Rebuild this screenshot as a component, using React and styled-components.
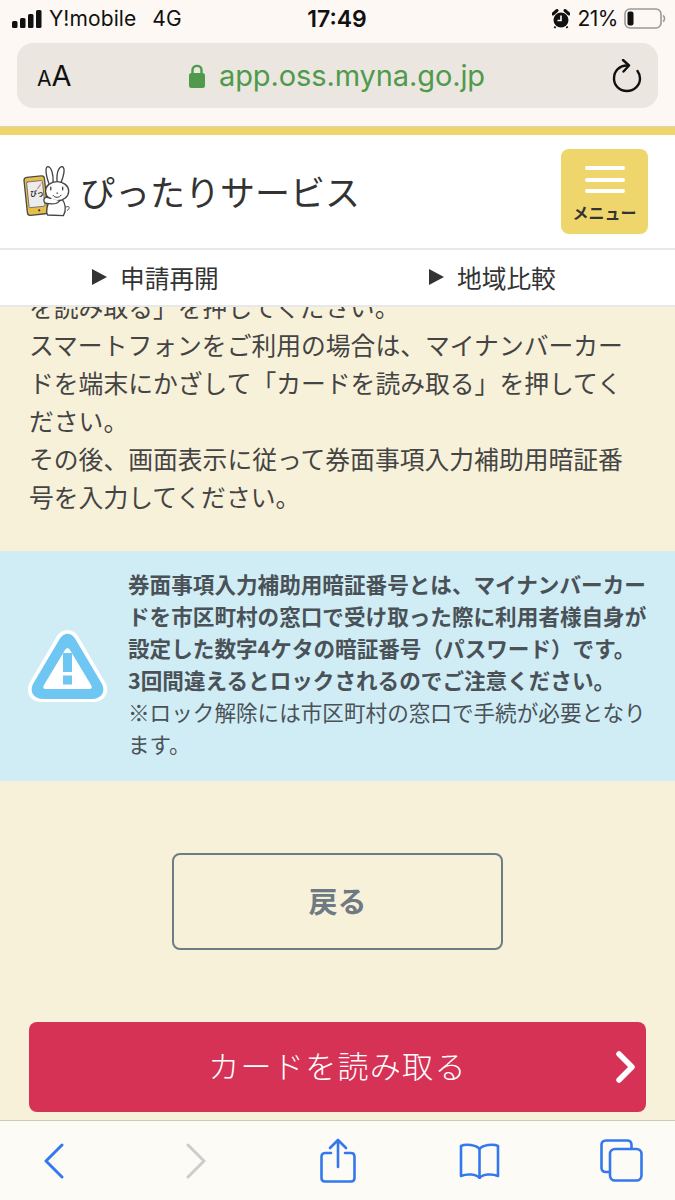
import React from 'react';
import styled, { createGlobalStyle } from 'styled-components';

const GlobalStyle = createGlobalStyle`
    html, body {
        margin: 0;
        padding: 0;
        background: #f8f1da;
    }
    * {
        box-sizing: border-box;
    }
`;

const jpFont = `"Noto Sans CJK JP", "Noto Sans", sans-serif`;
const iosFont = `Inter, Roboto, "Liberation Sans", sans-serif`;

const Phone = styled.div`
    width: 675px;
    height: 1200px;
    display: flex;
    flex-direction: column;
    overflow: hidden;
    font-family: ${jpFont};
`;

const Chrome = styled.div`
    height: 127px;
    flex: none;
    padding: 0 17px;
    background: #fdf8f3;
    border-bottom: 1px solid #e0d6b4;
`;

const StatusBar = styled.div`
    height: 43px;
    padding: 0 0 6px 0;
    margin-left: -5px;
    margin-right: -8px;
    display: grid;
    grid-template-columns: 1fr auto 1fr;
    align-items: center;
    font-family: ${iosFont};
    font-size: 21px;
    color: #111;
`;

const StatusLeft = styled.div`
    display: flex;
    align-items: center;
`;

const Carrier = styled.span`
    margin-left: 6px;
    letter-spacing: 0.1px;
`;

const Network = styled.span`
    margin-left: 16px;
`;

const Clock = styled.div`
    font-weight: 600;
    font-size: 23px;
    margin-right: 4px;
`;

const StatusRight = styled.div`
    display: flex;
    align-items: center;
    justify-content: flex-end;
`;

const Percent = styled.span`
    margin: 0 6px 0 8px;
    letter-spacing: -0.5px;
`;

const AddressBar = styled.div`
    height: 65px;
    display: flex;
    align-items: center;
    justify-content: space-between;
    padding: 0 15px 0 20px;
    border-radius: 16px;
    background: #ebe6e0;
`;

const TextSize = styled.div`
    display: flex;
    align-items: baseline;
    font-family: ${iosFont};
    color: #111;
    font-size: 29px;
    width: 34px;
`;

const SmallA = styled.span`
    font-size: 21px;
`;

const Url = styled.div`
    display: flex;
    align-items: center;
    gap: 14px;
    font-family: ${iosFont};
    font-size: 29px;
    color: #4f9a4c;
    margin-right: 8px;
    letter-spacing: -0.1px;
`;

const YellowStrip = styled.div`
    height: 8px;
    flex: none;
    background: #efd66c;
`;

const Header = styled.header`
    height: 115px;
    flex: none;
    display: flex;
    align-items: center;
    justify-content: space-between;
    padding: 0 27px 0 23px;
    background: #fff;
    border-bottom: 2px solid #e8e8e8;
`;

const Brand = styled.div`
    display: flex;
    align-items: center;
    gap: 9px;
    margin-bottom: 2px;
    font-size: 35px;
    color: #333;
    line-height: 1;
`;

const MenuButton = styled.div`
    width: 87px;
    height: 85px;
    border-radius: 8px;
    background: #efd66c;
    display: flex;
    flex-direction: column;
    align-items: center;
    padding-top: 17px;
`;

const MenuBar = styled.span`
    flex: none;
    width: 40px;
    height: 4px;
    border-radius: 2px;
    background: #fff;
    margin-bottom: 7.5px;
`;

const MenuLabel = styled.span`
    margin-top: 1px;
    font-size: 16px;
    line-height: 20px;
    font-weight: 700;
    color: #333;
`;

const Tabs = styled.nav`
    height: 57px;
    flex: none;
    display: grid;
    grid-template-columns: 337px 338px;
    background: #fff;
    border-bottom: 2px solid #e8e8e8;
`;

const Tab = styled.div`
    display: flex;
    align-items: center;
    gap: 13px;
    padding: 0 0 2px 92px;
    font-size: 24.7px;
    color: #333;
`;

const TabMark = styled.span`
    width: 0;
    height: 0;
    border-left: 15px solid #333;
    border-top: 8px solid transparent;
    border-bottom: 8px solid transparent;
`;

const Content = styled.main`
    flex: 1;
    min-height: 0;
    overflow: hidden;
    background: #f8f1da;
`;

const Guide = styled.p`
    margin: -20px 0 36px;
    padding-left: 29px;
    font-size: 24.8px;
    line-height: 38px;
    color: #444;
    white-space: nowrap;
`;

const Notice = styled.section`
    height: 230px;
    display: flex;
    align-items: center;
    background: #d0edf6;
    padding: 0 0 0 28px;
`;

const NoticeIcon = styled.svg`
    flex: none;
    width: 79px;
    height: 73px;
    margin-right: 21px;
`;

const NoticeText = styled.div`
    padding-bottom: 4px;
    font-size: 21.6px;
    line-height: 32px;
    color: #4a5257;
    white-space: nowrap;
`;

const Strong = styled.div`
    font-weight: 700;
`;

const BackButton = styled.div`
    width: 331px;
    height: 97px;
    margin: 72px auto;
    padding-bottom: 4px;
    border: 2px solid #6f7c86;
    border-radius: 8px;
    display: flex;
    align-items: center;
    justify-content: center;
    font-size: 29px;
    font-weight: 700;
    color: #6f7a82;
`;

const ReadButton = styled.div`
    position: relative;
    width: 617px;
    height: 90px;
    margin-left: 29px;
    padding-bottom: 6px;
    border-radius: 8px;
    background: #d63256;
    display: flex;
    align-items: center;
    justify-content: center;
    font-size: 31px;
    font-weight: 300;
    letter-spacing: 1.3px;
    color: #fff;
`;

const ReadChevron = styled.svg`
    position: absolute;
    right: 9px;
    top: 29px;
    width: 22px;
    height: 32px;
`;

const Toolbar = styled.footer`
    height: 80px;
    flex: none;
    display: flex;
    align-items: center;
    justify-content: space-between;
    padding: 0 32px;
    background: #fdfbf5;
    border-top: 1px solid #cfc9b8;
`;

const ToolSlot = styled.div`
    width: 44px;
    height: 48px;
    display: flex;
    align-items: center;
    justify-content: center;
`;

const Signal = () => (
    <svg width="31" height="20" viewBox="0 0 31 20" fill="#111">
        <rect x="0" y="12" width="5.5" height="7" rx="1.5" />
        <rect x="8" y="9" width="5.5" height="10" rx="1.5" />
        <rect x="16" y="5" width="5.5" height="14" rx="1.5" />
        <rect x="24" y="1" width="5.5" height="18" rx="1.5" />
    </svg>
);

const Alarm = () => (
    <svg width="18" height="20" viewBox="0 0 18 20">
        <circle cx="9" cy="11" r="7.5" fill="#111" />
        <path d="M1 5 L5 1.5 M17 5 L13 1.5" stroke="#111" strokeWidth="3" strokeLinecap="round" />
        <path d="M9 6.5 V11.5 H5.5" stroke="#fff" strokeWidth="1.6" fill="none" />
        <path d="M3.5 17.5 L2.5 19 M14.5 17.5 L15.5 19" stroke="#111" strokeWidth="2" />
    </svg>
);

const Battery = () => (
    <svg width="42" height="21" viewBox="0 0 42 21">
        <rect x="1" y="1" width="36" height="19" rx="5" fill="none" stroke="#999" strokeWidth="1.6" />
        <rect x="3.5" y="3.5" width="6" height="14" rx="2" fill="#111" />
        <path d="M39 7.5 C41 8.5 41 12.5 39 13.5" fill="none" stroke="#999" strokeWidth="1.6" />
    </svg>
);

const Lock = () => (
    <svg width="16" height="24" viewBox="0 0 16 24">
        <rect x="0" y="9" width="16" height="15" rx="2.5" fill="#4f9a4c" />
        <path d="M3.5 10 V6 C3.5 0.5 12.5 0.5 12.5 6 V10" fill="none" stroke="#4f9a4c" strokeWidth="2.4" />
    </svg>
);

const Reload = () => (
    <svg width="32" height="34" viewBox="0 0 32 34" fill="none" stroke="#111" strokeWidth="2.4" strokeLinecap="round" strokeLinejoin="round">
        <path d="M16 6.5 C8.5 6.5 3 12 3 19.5 C3 26.5 8.5 32 16 32 C23 32 29 26.5 29 19.5 C29 16.5 28 14 26.5 12" />
        <path d="M12 1 L18 6.5 L12.5 12.5" />
    </svg>
);

const Mascot = () => (
    <svg width="48" height="53" viewBox="40 30 145 160" fill="none" strokeLinecap="round" strokeLinejoin="round">
        <rect x="48" y="68" width="62" height="115" rx="9" fill="#e6bf48" stroke="#4a4a4a" strokeWidth="4" transform="rotate(-6 78 125)" />
        <rect x="55" y="82" width="48" height="78" rx="2" fill="#ececec" stroke="#666" strokeWidth="2.500" transform="rotate(-6 78 125)" />
        <circle cx="89" cy="170" r="3.5" fill="#333" />
        <text x="62" y="128" fontSize="20" fontWeight="700" fill="#222" fontFamily={jpFont}>ぴっ</text>
        <path d="M84 104 L92 94" stroke="#e57a86" strokeWidth="3.500" />
        <path d="M92 92 L100 80" stroke="#aaa" strokeWidth="2.500" />
        <path d="M118 88 C106 54 108 38 116 38 C126 40 132 62 131 84" fill="#fff" stroke="#444" strokeWidth="4" />
        <path d="M143 84 C140 54 150 36 160 38 C168 44 162 68 154 88" fill="#fff" stroke="#444" strokeWidth="4" />
        <path d="M122 138 C114 150 108 174 114 184 L162 186 C172 170 168 148 158 136 Z" fill="#fff" stroke="#444" strokeWidth="4" />
        <path d="M170 160 C180 154 184 164 174 170" fill="#fff" stroke="#444" strokeWidth="3" />
        <ellipse cx="143" cy="112" rx="35" ry="29" fill="#fff" stroke="#444" strokeWidth="4" />
        <path d="M124 100 V108 M160 100 V108" stroke="#222" strokeWidth="3.500" />
        <path d="M131 125 C136 133 150 133 155 124" stroke="#333" strokeWidth="3" />
        <path d="M142 118 H145" stroke="#333" strokeWidth="3" />
        <path d="M150 142 C142 152 126 152 108 148 C100 144 102 132 110 130 L124 134" fill="#fff" stroke="#444" strokeWidth="4" />
    </svg>
);

const WarningGlyph = () => (
    <NoticeIcon viewBox="0 0 79 73">
        <path d="M29 6 C34 -2 45 -2 50 6 L77 52 C83 62 76 72 65 72 H14 C3 72 -4 62 2 52 Z" fill="#fff" />
        <path d="M32 8.500 C36 2 43 2 47 8.500 L74 54 C78 62 73 69 64 69 H15 C6 69 1 62 5 54 Z" fill="#6ec6f3" />
        <path d="M37 20 C38.500 17.500 40.500 17.500 42 20 L63 55 C64.500 57.500 63.500 59 61 59 H18 C15.500 59 14.500 57.500 16 55 Z" fill="#fff" />
        <rect x="35" y="23" width="9" height="19" fill="#6ec6f3" />
        <rect x="35" y="45.500" width="9" height="9" fill="#6ec6f3" />
    </NoticeIcon>
);

const Back = () => (
    <svg width="22" height="36" viewBox="0 0 22 36" fill="none" stroke="#3478f0" strokeWidth="3" strokeLinecap="round" strokeLinejoin="round">
        <path d="M19 2 L3 18 L19 34" />
    </svg>
);

const Forward = () => (
    <svg width="22" height="36" viewBox="0 0 22 36" fill="none" stroke="#ccc" strokeWidth="3" strokeLinecap="round" strokeLinejoin="round">
        <path d="M3 2 L19 18 L3 34" />
    </svg>
);

const Share = () => (
    <svg width="36" height="45" viewBox="0 0 36 45" fill="none" stroke="#3478f0" strokeWidth="2.6" strokeLinecap="round" strokeLinejoin="round">
        <path d="M11 15 H5 C2.500 15 1.500 16.500 1.500 19 V40 C1.500 42.500 2.500 43.500 5 43.500 H31 C33.500 43.500 34.500 42.500 34.500 40 V19 C34.500 16.500 33.500 15 31 15 H25" />
        <path d="M18 29 V2 M10 10 L18 2 L26 10" />
    </svg>
);

const Book = () => (
    <svg width="41" height="36" viewBox="0 0 41 36" fill="none" stroke="#3478f0" strokeWidth="2.6" strokeLinecap="round" strokeLinejoin="round">
        <path d="M20.500 6 C17 2 7 0.500 2 3 V33 C8 30.500 17 31 20.500 35 C24 31 33 30.500 39 33 V3 C34 0.500 24 2 20.500 6 Z" />
        <path d="M20.500 6 V35" />
    </svg>
);

const TabsIcon = () => (
    <svg width="43" height="43" viewBox="0 0 43 43" fill="none" stroke="#3478f0" strokeWidth="2.6" strokeLinejoin="round">
        <path d="M9 33 H6 C3 33 1.500 31.500 1.500 29 V6 C1.500 3 3 1.500 6 1.500 H27 C30 1.500 31.500 3 31.500 6 V9" />
        <rect x="10" y="10" width="31.500" height="31.500" rx="5" />
    </svg>
);

const App = () => (
    <>
        <GlobalStyle />
        <Phone>
            <Chrome>
                <StatusBar>
                    <StatusLeft>
                        <Signal />
                        <Carrier>Y!mobile</Carrier>
                        <Network>4G</Network>
                    </StatusLeft>
                    <Clock>17:49</Clock>
                    <StatusRight>
                        <Alarm />
                        <Percent>21%</Percent>
                        <Battery />
                    </StatusRight>
                </StatusBar>
                <AddressBar>
                    <TextSize><SmallA>A</SmallA>A</TextSize>
                    <Url>
                        <Lock />
                        app.oss.myna.go.jp
                    </Url>
                    <Reload />
                </AddressBar>
            </Chrome>
            <YellowStrip />
            <Header>
                <Brand>
                    <Mascot />
                    ぴったりサービス
                </Brand>
                <MenuButton>
                    <MenuBar />
                    <MenuBar />
                    <MenuBar />
                    <MenuLabel>メニュー</MenuLabel>
                </MenuButton>
            </Header>
            <Tabs>
                <Tab><TabMark />申請再開</Tab>
                <Tab><TabMark />地域比較</Tab>
            </Tabs>
            <Content>
                <Guide>
                    を読み取る」を押してください。<br />
                    スマートフォンをご利用の場合は、マイナンバーカー<br />
                    ドを端末にかざして「カードを読み取る」を押してく<br />
                    ださい。<br />
                    その後、画面表示に従って券面事項入力補助用暗証番<br />
                    号を入力してください。
                </Guide>
                <Notice>
                    <WarningGlyph />
                    <NoticeText>
                        <Strong>
                            券面事項入力補助用暗証番号とは、マイナンバーカー<br />
                            ドを市区町村の窓口で受け取った際に利用者様自身が<br />
                            設定した数字4ケタの暗証番号（パスワード）です。<br />
                            3回間違えるとロックされるのでご注意ください。
                        </Strong>
                        ※ロック解除には市区町村の窓口で手続が必要となり<br />
                        ます。
                    </NoticeText>
                </Notice>
                <BackButton>戻る</BackButton>
                <ReadButton>
                    カードを読み取る
                    <ReadChevron viewBox="0 0 22 32" fill="none" stroke="#fff" strokeWidth="5.5" strokeLinecap="round" strokeLinejoin="round">
                        <path d="M4 3 L17 16 L4 29" />
                    </ReadChevron>
                </ReadButton>
            </Content>
            <Toolbar>
                <ToolSlot><Back /></ToolSlot>
                <ToolSlot><Forward /></ToolSlot>
                <ToolSlot><Share /></ToolSlot>
                <ToolSlot><Book /></ToolSlot>
                <ToolSlot><TabsIcon /></ToolSlot>
            </Toolbar>
        </Phone>
    </>
);

export default App;
